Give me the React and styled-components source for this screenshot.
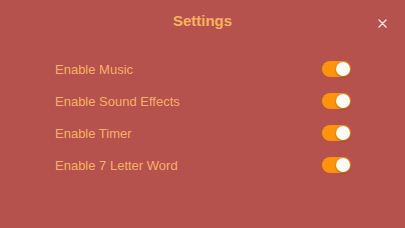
import React, { useState } from "react";
import styled, { createGlobalStyle } from "styled-components";

const Global = createGlobalStyle`
  html, body { margin: 0; padding: 0; background: #b6524e; }
  body { font-family: "Liberation Sans", Arial, sans-serif; }
`;

const Screen = styled.div`
  width: 405px;
  height: 228px;
  background: #b6524e;
  display: flex;
  flex-direction: column;
  box-sizing: border-box;
  overflow: hidden;
`;

const Header = styled.div`
  position: relative;
  height: 41px;
  display: flex;
  align-items: center;
  justify-content: center;
`;

const Title = styled.h1`
  margin: 0;
  font-size: 15px;
  font-weight: 700;
  color: #f7b25e;
`;

const Close = styled.button`
  position: absolute;
  right: 15px;
  top: 16px;
  width: 15px;
  height: 15px;
  padding: 0;
  border: 0;
  background: transparent;
  display: flex;
  align-items: center;
  justify-content: center;
  cursor: pointer;
`;

const List = styled.div`
  display: flex;
  flex-direction: column;
  padding: 12px 54px 0 55px;
`;

const Row = styled.div`
  height: 32px;
  display: flex;
  align-items: center;
  justify-content: space-between;
`;

const Label = styled.span`
  font-size: 13px;
  color: #f6b063;
`;

const Toggle = styled.button`
  position: relative;
  width: 29px;
  height: 16px;
  border-radius: 8px;
  border: 0;
  padding: 0;
  background: ${(p) => (p.$on ? "#fd9408" : "#8a3b38")};
  cursor: pointer;
`;

const Knob = styled.span`
  position: absolute;
  top: 1px;
  left: ${(p) => (p.$on ? "14px" : "1px")};
  width: 14px;
  height: 14px;
  border-radius: 50%;
  background: #fffdf7;
  box-shadow: 0 1px 2px rgba(90, 40, 0, 0.45);
`;

const items = [
  "Enable Music",
  "Enable Sound Effects",
  "Enable Timer",
  "Enable 7 Letter Word",
];

export default function App() {
  const [state, setState] = useState(items.map(() => true));
  return (
    <Screen>
      <Global />
      <Header>
        <Title>Settings</Title>
        <Close aria-label="close">
          <svg width="9" height="9" viewBox="0 0 9 9">
            <path d="M1 1L8 8M8 1L1 8" stroke="#f6e6e6" strokeWidth="1.4" strokeLinecap="round" />
          </svg>
        </Close>
      </Header>
      <List>
        {items.map((t, i) => (
          <Row key={t}>
            <Label>{t}</Label>
            <Toggle
              $on={state[i]}
              onClick={() => setState((s) => s.map((v, j) => (j === i ? !v : v)))}
            >
              <Knob $on={state[i]} />
            </Toggle>
          </Row>
        ))}
      </List>
    </Screen>
  );
}
